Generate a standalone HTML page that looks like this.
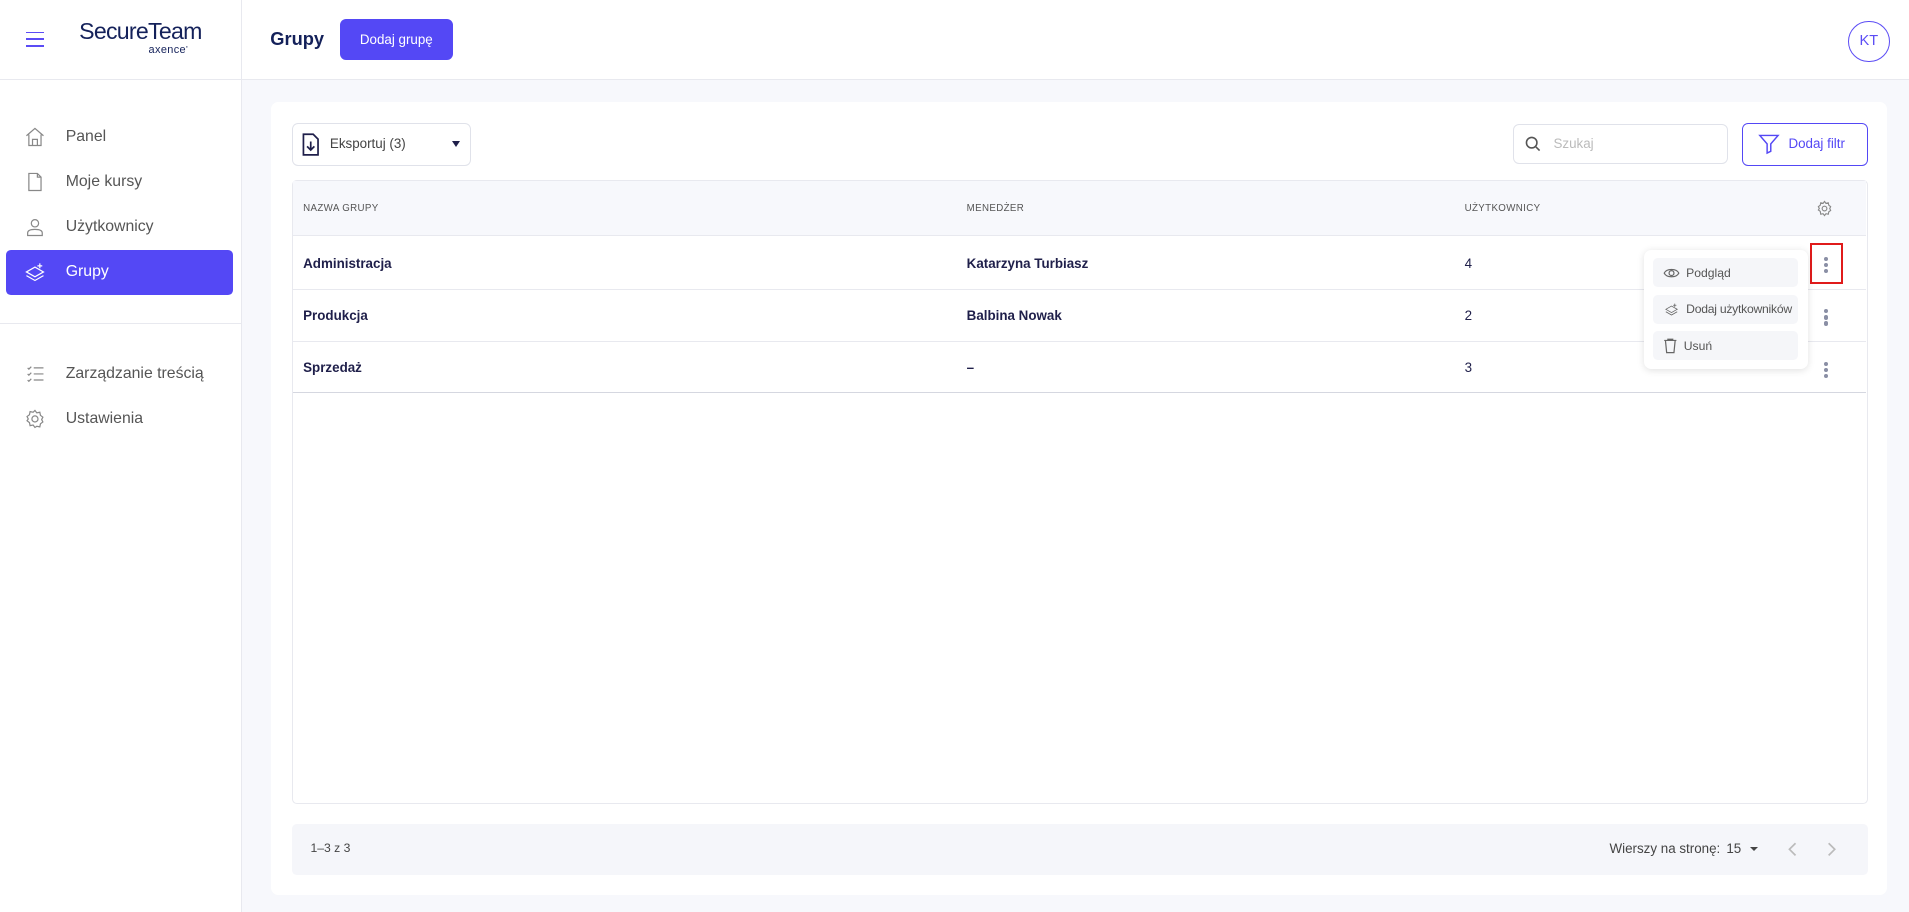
<!DOCTYPE html>
<html><head><meta charset="utf-8"><style>
*{box-sizing:border-box;margin:0;padding:0}
html,body{width:1909px;height:912px;overflow:hidden;background:#fff}
#w{zoom:1.21747;width:1568px;height:749px;position:relative;font-family:"Liberation Sans",sans-serif;color:#1f1f4a}
.a{position:absolute}
.side{left:0;top:0;width:199px;height:749px;border-right:1px solid #e8e9ef;background:#fff}
.nav{left:5px;width:186px;height:37px;border-radius:4px;font-size:13px;color:#555;display:flex;align-items:center}
.nav svg{position:absolute;left:15px}
.nav span{position:absolute;left:49px}
.th{font-size:8px;color:#555;letter-spacing:.3px;top:167px}
.td{font-size:11px;font-weight:bold;color:#1f1f4a}
.dots{width:3px}
.dots i{display:block;width:3.5px;height:3.5px;border-radius:50%;background:#8a8fa5;margin-bottom:1.5px}
.mi{left:8px;width:119px;height:24px;background:#f5f6f9;border-radius:4px;font-size:10px;color:#555;display:flex;align-items:center;white-space:nowrap}
.mi svg{margin:0 5px 0 8px}
</style></head><body><div id="w">
<div class="a side"></div>
<div class="a" style="left:0;top:65px;width:1568px;height:1px;background:#e8e9ef"></div>
<div class="a" style="left:199px;top:66px;width:1369px;height:683px;background:#f7f8fc"></div>
<div class="a" style="left:21px;top:26px;width:15px;height:1.5px;background:#5b4cf5"></div>
<div class="a" style="left:21px;top:31.5px;width:15px;height:1.5px;background:#5b4cf5"></div>
<div class="a" style="left:21px;top:37px;width:15px;height:1.5px;background:#5b4cf5"></div>
<div class="a" style="left:65px;top:15px;font-size:19px;color:#14215a;letter-spacing:-.6px">SecureTeam</div>
<div class="a" style="left:122px;top:36px;font-size:9px;color:#14215a;letter-spacing:.3px">axence<sup style="font-size:4px">•</sup></div>
<div class="a" style="left:222px;top:23px;font-size:15px;font-weight:bold;color:#14215a">Grupy</div>
<div class="a" style="left:279px;top:16px;width:93px;height:33px;background:#5448f5;border-radius:5px;color:#fff;font-size:11px;display:flex;align-items:center;justify-content:center">Dodaj grupę</div>
<div class="a" style="left:1518px;top:17px;width:34px;height:34px;border:1px solid #5b4cf5;border-radius:50%;color:#5b4cf5;font-size:12px;display:flex;align-items:center;justify-content:center">KT</div>
<div class="a nav" style="top:94px"><svg width="18" height="18" viewBox="0 0 18 18" fill="none" stroke="#888" stroke-width="1"><path d="M2 8L9 2l7 6M4 7v9h10V7M7 16v-5h4v5"/></svg><span>Panel</span></div>
<div class="a nav" style="top:131px"><svg width="18" height="18" viewBox="0 0 18 18" fill="none" stroke="#888"><path d="M4 2h7l3 3v11H4zM11 2v3h3"/></svg><span>Moje kursy</span></div>
<div class="a nav" style="top:168px"><svg width="18" height="18" viewBox="0 0 18 18" fill="none" stroke="#888"><circle cx="9" cy="6" r="3"/><path d="M3 16v-2c0-2 2-3 6-3s6 1 6 3v2z"/></svg><span>Użytkownicy</span></div>
<div class="a nav" style="top:205px;background:#5448f5;color:#fff"><svg width="18" height="18" viewBox="0 0 18 18" fill="none" stroke="#fff"><path d="M2 9l7-4 7 4-7 4zM2 12l7 4 7-4M13 2v4M11 4h4"/></svg><span>Grupy</span></div>
<div class="a" style="left:0;top:265px;width:198px;height:1px;background:#e8e9ef"></div>
<div class="a nav" style="top:289px"><svg width="18" height="18" viewBox="0 0 18 18" fill="none" stroke="#888"><path d="M3 4l1 1 2-2M3 9l1 1 2-2M3 14l1 1 2-2M8 4h8M8 9h8M8 14h8"/></svg><span>Zarządzanie treścią</span></div>
<div class="a nav" style="top:326px"><svg width="18" height="18" viewBox="0 0 18 18" fill="none" stroke="#888"><circle cx="9" cy="9" r="2.5"/><path d="M9 2l1.5 2 2.5-.5.5 2.5 2 1.5-1 2 1 2-2 1.5-.5 2.5-2.5-.5L9 16l-1.5-2-2.5.5L4.5 12 2.5 10.5l1-1.5-1-2L4.5 5.5 5 3l2.5.5z"/></svg><span>Ustawienia</span></div>
<div class="a" style="left:223px;top:84px;width:1327px;height:651px;background:#fff;border-radius:6px"></div>
<div class="a" style="left:240px;top:101px;width:147px;height:35px;border:1px solid #e0e2ea;border-radius:5px"></div>
<svg class="a" style="left:247px;top:109px" width="16" height="19" viewBox="0 0 16 19" fill="none" stroke="#1f1f4a" stroke-width="1.4"><path d="M2 1h8l4 4v13H2zM8 7v7M5 11l3 3 3-3"/></svg>
<div class="a" style="left:271px;top:112px;font-size:11px;color:#444">Eksportuj (3)</div>
<div class="a" style="left:371px;top:116px;width:0;height:0;border-left:4px solid transparent;border-right:4px solid transparent;border-top:5px solid #1f1f4a"></div>
<div class="a" style="left:1243px;top:102px;width:176px;height:33px;border:1px solid #e0e2ea;border-radius:5px"></div>
<svg class="a" style="left:1253px;top:112px" width="13" height="13" viewBox="0 0 13 13" fill="none" stroke="#555" stroke-width="1.3"><circle cx="5.5" cy="5.5" r="4.3"/><path d="M9 9l3 3"/></svg>
<div class="a" style="left:1276px;top:112px;font-size:11px;color:#bbb">Szukaj</div>
<div class="a" style="left:1431px;top:101px;width:103px;height:35px;border:1px solid #5448f5;border-radius:5px"></div>
<svg class="a" style="left:1444px;top:109px" width="18" height="18" viewBox="0 0 18 18" fill="none" stroke="#5448f5" stroke-width="1.2"><path d="M1.5 2h15l-6 7v6l-3 1.5V9z"/></svg>
<div class="a" style="left:1469px;top:112px;font-size:11px;color:#5448f5">Dodaj filtr</div>
<div class="a" style="left:240px;top:148px;width:1294px;height:512px;border:1px solid #e8e9ef;border-radius:4px"></div>
<div class="a" style="left:241px;top:149px;width:1292px;height:45px;background:#f7f8fc;border-bottom:1px solid #e8e9ef"></div>
<div class="a th" style="left:249px">NAZWA GRUPY</div>
<div class="a th" style="left:794px">MENEDŻER</div>
<div class="a th" style="left:1203px">UŻYTKOWNICY</div>
<svg class="a" style="left:1492px;top:164px" width="14" height="14" viewBox="0 0 18 18" fill="none" stroke="#888" stroke-width="1.2"><circle cx="9" cy="9" r="2.5"/><path d="M9 1.5l1.5 2 2.5-.5.5 2.5 2 1.5-1 2 1 2-2 1.5-.5 2.5-2.5-.5L9 16.5l-1.5-2-2.5.5L4.5 12 2.5 10.5l1-1.5-1-2L4.5 5.5 5 3l2.5.5z"/></svg>
<div class="a" style="left:241px;top:237px;width:1292px;height:1px;background:#e8e9ef"></div>
<div class="a" style="left:241px;top:280px;width:1292px;height:1px;background:#e8e9ef"></div>
<div class="a" style="left:241px;top:322px;width:1292px;height:1px;background:#d5d7e0"></div>
<div class="a td" style="left:249px;top:210px">Administracja</div>
<div class="a td" style="left:794px;top:210px">Katarzyna Turbiasz</div>
<div class="a td" style="left:1203px;top:210px;font-weight:normal">4</div>
<div class="a td" style="left:249px;top:253px">Produkcja</div>
<div class="a td" style="left:794px;top:253px">Balbina Nowak</div>
<div class="a td" style="left:1203px;top:253px;font-weight:normal">2</div>
<div class="a td" style="left:249px;top:296px">Sprzedaż</div>
<div class="a td" style="left:794px;top:296px">–</div>
<div class="a td" style="left:1203px;top:296px;font-weight:normal">3</div>
<div class="a dots" style="left:1498px;top:211px"><i></i><i></i><i></i></div>
<div class="a dots" style="left:1498px;top:254px"><i></i><i></i><i></i></div>
<div class="a dots" style="left:1498px;top:297px"><i></i><i></i><i></i></div>
<div class="a" style="left:1487px;top:200px;width:27px;height:33px;border:2px solid #e01b1b"></div>
<div class="a" style="left:1350px;top:205px;width:135px;height:98px;background:#fff;border-radius:6px;box-shadow:0 1px 6px rgba(0,0,0,.12)">
<div class="a mi" style="top:7px"><svg width="14" height="10" viewBox="0 0 14 10" fill="none" stroke="#666"><path d="M1 5c2-4 10-4 12 0-2 4-10 4-12 0z"/><circle cx="7" cy="5" r="2"/></svg>Podgląd</div>
<div class="a mi" style="top:37px"><svg width="14" height="12" viewBox="0 0 18 18" fill="none" stroke="#666"><path d="M2 9l7-4 7 4-7 4zM2 12l7 4 7-4M13 2v4M11 4h4"/></svg><span style="letter-spacing:-.2px">Dodaj użytkowników</span></div>
<div class="a mi" style="top:67px"><svg width="12" height="13" viewBox="0 0 12 13" fill="none" stroke="#666"><path d="M1 2h10M4 2V1h4v1M2 2l1 10h6l1-10"/></svg>Usuń</div>
</div>
<div class="a" style="left:240px;top:677px;width:1294px;height:42px;background:#f5f6fa;border-radius:4px"></div>
<div class="a" style="left:255px;top:691px;font-size:10px;color:#444">1–3 z 3</div>
<div class="a" style="left:1322px;top:691px;font-size:11px;color:#444">Wierszy na stronę:</div>
<div class="a" style="left:1418px;top:691px;font-size:11px;color:#444">15</div>
<div class="a" style="left:1437px;top:696px;border-left:4px solid transparent;border-right:4px solid transparent;border-top:4px solid #444"></div>
<svg class="a" style="left:1468px;top:692px" width="10" height="12" viewBox="0 0 10 12" fill="none" stroke="#bbb" stroke-width="1.4"><path d="M7 1L2 6l5 5"/></svg>
<svg class="a" style="left:1499px;top:692px" width="10" height="12" viewBox="0 0 10 12" fill="none" stroke="#bbb" stroke-width="1.4"><path d="M3 1l5 5-5 5"/></svg>
</div></body></html>
